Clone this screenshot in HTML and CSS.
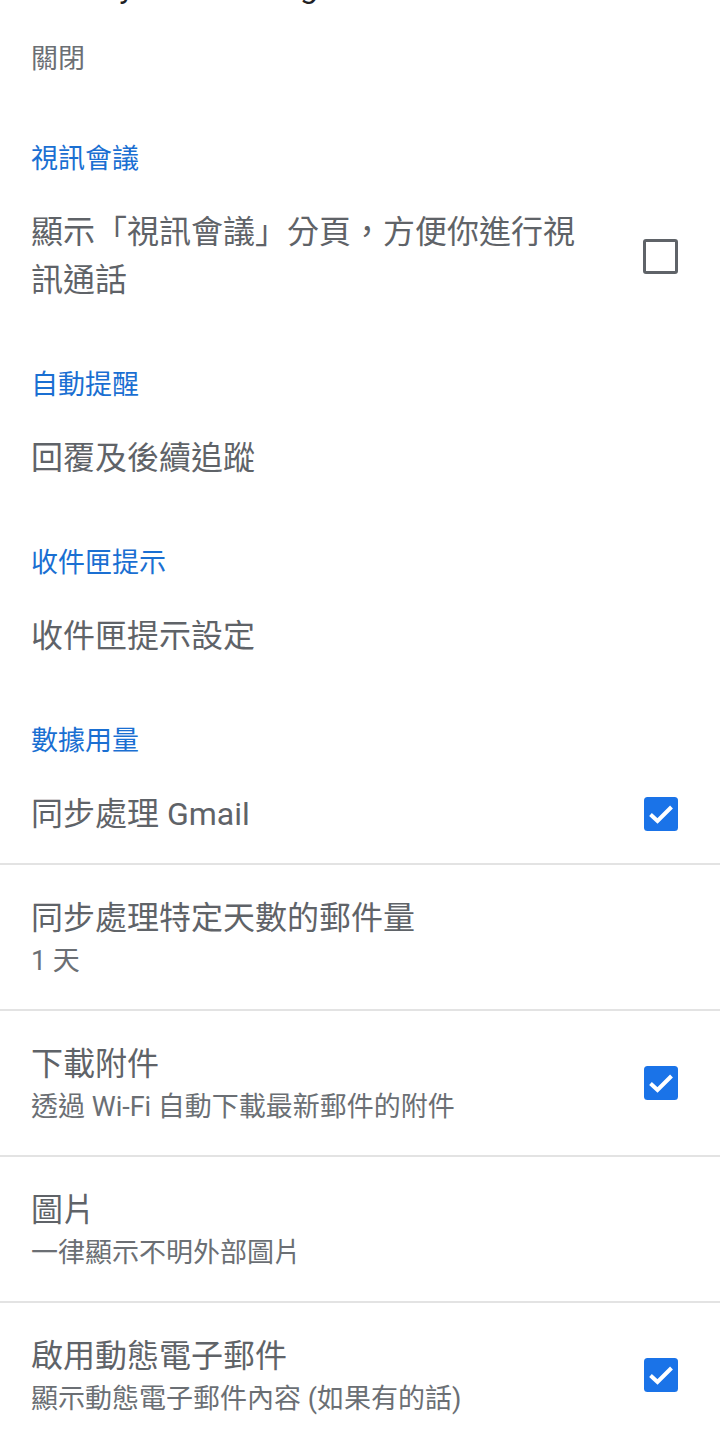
FILE: index.html
```html
<!DOCTYPE html>
<html lang="zh-Hant">
<head>
<meta charset="utf-8">
<title>設定</title>
<link rel="stylesheet" href="styles.css">
</head>
<body>
<div class="settings">
  <div class="item item--clipped">
    <div class="text">
      <div class="title title--clipped">Privacy and tracking</div>
      <div class="summary">關閉</div>
    </div>
  </div>

  <div class="category">視訊會議</div>
  <div class="item">
    <div class="text">
      <div class="title">顯示「視訊會議」分頁，方便你進行視訊通話</div>
    </div>
    <span class="checkbox"></span>
  </div>

  <div class="category">自動提醒</div>
  <div class="item">
    <div class="text">
      <div class="title">回覆及後續追蹤</div>
    </div>
  </div>

  <div class="category">收件匣提示</div>
  <div class="item">
    <div class="text">
      <div class="title">收件匣提示設定</div>
    </div>
  </div>

  <div class="category">數據用量</div>
  <div class="item item--group-end">
    <div class="text">
      <div class="title">同步處理 Gmail</div>
    </div>
    <span class="checkbox checkbox--on"><svg viewBox="0 0 34 34" width="34" height="34"><rect width="34" height="34" rx="3.5" fill="#1a73e8"/><polyline points="6.5,17.5 13.5,24 27.5,10" fill="none" stroke="#fff" stroke-width="4"/></svg></span>
  </div>
  <div class="item item--divided">
    <div class="text">
      <div class="title">同步處理特定天數的郵件量</div>
      <div class="summary">1 天</div>
    </div>
  </div>
  <div class="item item--divided">
    <div class="text">
      <div class="title">下載附件</div>
      <div class="summary">透過 Wi-Fi 自動下載最新郵件的附件</div>
    </div>
    <span class="checkbox checkbox--on"><svg viewBox="0 0 34 34" width="34" height="34"><rect width="34" height="34" rx="3.5" fill="#1a73e8"/><polyline points="6.5,17.5 13.5,24 27.5,10" fill="none" stroke="#fff" stroke-width="4"/></svg></span>
  </div>
  <div class="item item--divided">
    <div class="text">
      <div class="title">圖片</div>
      <div class="summary">一律顯示不明外部圖片</div>
    </div>
  </div>
  <div class="item item--divided">
    <div class="text">
      <div class="title">啟用動態電子郵件</div>
      <div class="summary">顯示動態電子郵件內容 (如果有的話)</div>
    </div>
    <span class="checkbox checkbox--on"><svg viewBox="0 0 34 34" width="34" height="34"><rect width="34" height="34" rx="3.5" fill="#1a73e8"/><polyline points="6.5,17.5 13.5,24 27.5,10" fill="none" stroke="#fff" stroke-width="4"/></svg></span>
  </div>
</div>
</body>
</html>
```

FILE: styles.css
```css
html, body {
  margin: 0;
  padding: 0;
  background: #ffffff;
}

body {
  font-family: Roboto, "Noto Sans CJK TC", sans-serif;
  overflow: hidden;
}

.settings {
  display: flex;
  flex-direction: column;
}

.category {
  padding: 32px 42px 0 31px;
  font-size: 27px;
  line-height: 40px;
  color: #1a6fd2;
}

.item {
  display: flex;
  align-items: center;
  gap: 48px;
  padding: 29px 42px 29px 31px;
}

.item--divided {
  border-top: 2px solid #e3e3e3;
}

.item--group-end {
  padding-bottom: 25px;
}

.item--clipped {
  padding-top: 0;
  margin-top: -34px;
}

.text {
  flex: 1;
  min-width: 0;
}

.title {
  font-size: 32px;
  line-height: 48px;
  color: #5f6368;
}

.title--clipped {
  color: #202124;
  margin-top: -3px;
  margin-bottom: 29px;
}

.summary {
  font-size: 27px;
  line-height: 38px;
  color: #6b6f74;
}

.checkbox {
  flex: none;
  width: 35px;
  height: 35px;
  box-sizing: border-box;
  border: 3.5px solid #5f6368;
  border-radius: 3px;
}

.checkbox--on {
  border: 0;
  width: 34px;
  height: 34px;
}

.checkbox--on svg {
  display: block;
}
```
